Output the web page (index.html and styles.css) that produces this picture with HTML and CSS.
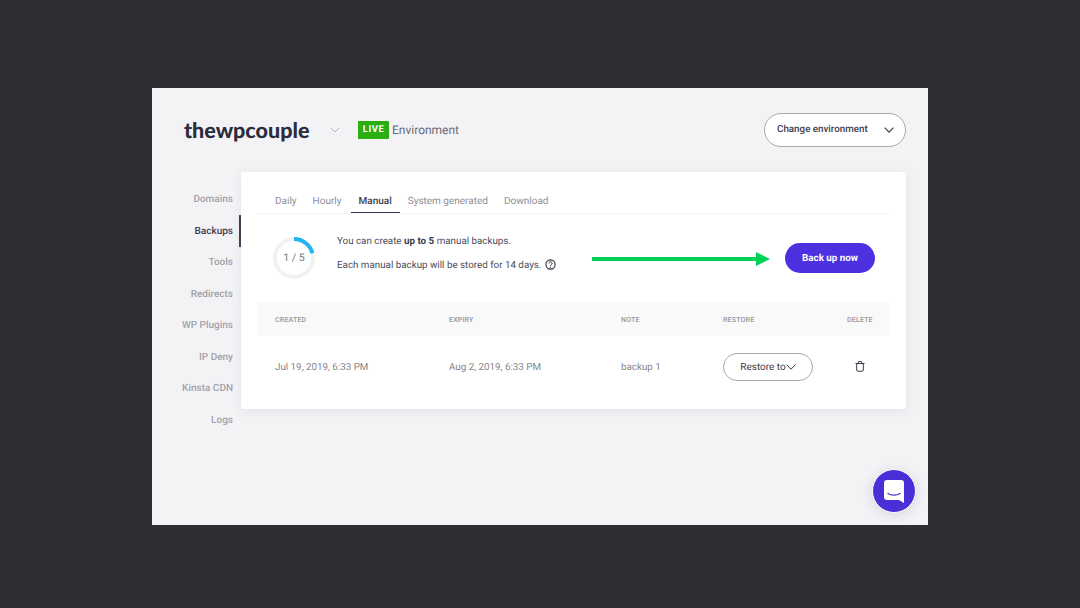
FILE: index.html
```html
<!DOCTYPE html>
<html lang="en">
<head>
<meta charset="utf-8">
<title>Backups</title>
<link rel="stylesheet" href="styles.css">
</head>
<body>
<div class="app">
  <header class="top">
    <div class="brand">thewpcouple</div>
    <svg class="brand-chev" width="10" height="6" viewBox="0 0 10 6"><path d="M1 1l4 4 4-4" fill="none" stroke="#b4b5bd" stroke-width="1"/></svg>
    <span class="live">LIVE</span>
    <span class="env">Environment</span>
    <button class="env-btn">Change environment
      <svg width="10" height="6" viewBox="0 0 10 6"><path d="M.6.6L5 5.2 9.4.6" fill="none" stroke="#3a3b4a" stroke-width="1.1"/></svg>
    </button>
  </header>
  <div class="main">
    <nav class="side">
      <a>Domains</a>
      <a class="on">Backups</a>
      <a>Tools</a>
      <a>Redirects</a>
      <a>WP Plugins</a>
      <a>IP Deny</a>
      <a>Kinsta CDN</a>
      <a>Logs</a>
    </nav>
    <section class="card">
      <div class="tabs">
        <a>Daily</a><a>Hourly</a><a class="sel">Manual</a><a>System generated</a><a class="last">Download</a>
      </div>
      <div class="info">
        <div class="ring">
          <svg width="42" height="42" viewBox="0 0 42 42">
            <circle cx="21" cy="21" r="19" fill="none" stroke="#f2f2f3" stroke-width="4"/>
            <path d="M21 2A19 19 0 0 1 39.400 16.200" fill="none" stroke="#22b4f2" stroke-width="4"/>
          </svg>
          <span>1 / 5</span>
        </div>
        <div class="copy">
          <p>You can create <b>up to 5</b> manual backups.</p>
          <p>Each manual backup will be stored for 14 days.
            <svg class="help" width="11" height="11" viewBox="0 0 11 11"><circle cx="5.5" cy="5.5" r="4.6" fill="none" stroke="#2b2c3a" stroke-width="1.1"/><path d="M3.9 4.4a1.6 1.6 0 1 1 2.4 1.4c-.5.3-.8.5-.8 1" fill="none" stroke="#2b2c3a" stroke-width="1"/><circle cx="5.5" cy="8.2" r=".6" fill="#2b2c3a"/></svg>
          </p>
        </div>
        <svg class="arrow" width="178" height="14" viewBox="0 0 178 14"><path d="M0 5h164V0l14 7-14 7V9H0z" fill="#00d258"/></svg>
        <button class="primary">Back up now</button>
      </div>
      <div class="table">
        <div class="row head">
          <span class="c1">CREATED</span><span class="c2">EXPIRY</span><span class="c3">NOTE</span><span class="c4">RESTORE</span><span class="c5">DELETE</span>
        </div>
        <div class="row body">
          <span class="c1">Jul 19, 2019, 6:33 PM</span><span class="c2">Aug 2, 2019, 6:33 PM</span><span class="c3">backup 1</span>
          <span class="c4"><button class="restore">Restore to<svg width="10" height="6" viewBox="0 0 10 6"><path d="M.5.6L5 5.200 9.500.6" fill="none" stroke="#3a3b4a" stroke-width="1"/></svg></button></span>
          <span class="c5"><svg width="10" height="11" viewBox="0 0 10 11"><path d="M1.700 2.500h6.600v6.700a1 1 0 0 1-1 1H2.700a1 1 0 0 1-1-1zM.5 2.500h9M3.300 2.300V1a.5.5 0 0 1 .5-.5h2.400a.5.5 0 0 1 .5.5v1.300" fill="none" stroke="#3a3b48" stroke-width="1"/></svg></span>
        </div>
      </div>
    </section>
  </div>
  <button class="chat" aria-label="Chat">
    <svg width="20" height="23" viewBox="0 0 20 23"><path d="M3 0h14a3 3 0 0 1 3 3v20l-5-3H3a3 3 0 0 1-3-3V3a3 3 0 0 1 3-3z" fill="#fff"/><path d="M4 13.500c3 2.200 9 2.200 12 0" fill="none" stroke="#4a2fd6" stroke-width="1.300" stroke-linecap="round"/></svg>
  </button>
</div>
</body>
</html>
```
FILE: styles.css
```css
* { box-sizing: border-box; }
html, body { margin: 0; height: 100%; }
body {
  background: #2e2f33;
  display: flex;
  align-items: center;
  justify-content: center;
  height: 608px;
  overflow: hidden;
  font-family: Roboto, "Liberation Sans", sans-serif;
  font-size: 10px;
  color: #4b4c5a;
  text-rendering: geometricPrecision;
}
.app {
  position: relative;
  width: 776px;
  height: 437px;
  margin-top: 5px;
  background: #f3f3f6;
  padding: 25px 22px 0 0;
}
.top { display: flex; align-items: center; height: 33px; padding-left: 32px; }
.brand { font-family: Lato, sans-serif; font-weight: 900; font-size: 21.500px; color: #2b2c3c; width: 146px; }
.brand-chev { margin-right: 18px; }
.live { background: #2aae12; color: #fff; font-weight: 700; font-size: 9.500px; letter-spacing: .5px; width: 31px; height: 18px; line-height: 18px; text-align: center; border-radius: 1px; }
.env { margin-left: 3px; font-size: 12px; color: #6a6b78; }
.env-btn {
  margin-left: auto; width: 142px; height: 34px; border: 1px solid #a9a9ae; border-radius: 17px;
  background: #fff; font: 500 9.800px Roboto, sans-serif; color: #3c3d4e; text-rendering: geometricPrecision;
  display: flex; align-items: center; justify-content: space-between; padding: 0 11px 0 12px;
}
.main { display: flex; margin-top: 26px; }
.side { width: 89px; padding-top: 11px; display: flex; flex-direction: column; }
.side a { height: 31.500px; line-height: 31.500px; padding-top: 1px; text-align: right; padding-right: 8px; font-weight: 500; color: #a1a2a8; position: relative; }
.side a.on { color: #3c3d4e; }
.side a.on::after { content: ""; position: absolute; right: 0; top: 0; width: 2px; height: 32px; background: #3f4050; }
.card { flex: 1; height: 237px; background: #fff; border-radius: 0 2px 2px 2px; box-shadow: 0 2px 10px rgba(60,60,90,.09); padding: 16px 17px 0; }
.tabs { display: flex; height: 26px; padding-left: 9px; border-bottom: 1px solid #f3f3f5; }
.tabs a { padding: 1px 8px 0; line-height: 25px; font-weight: 400; color: #8d8e96; height: 25px; }
.tabs a.sel { color: #3c3d4e; font-weight: 500; border-bottom: 1.500px solid #3c3d4e; height: 25px; margin-left: 1px; }
.tabs a.last { margin-left: 0; }
.info { display: flex; align-items: center; height: 88px; padding: 0 14px 0 15px; }
.ring { position: relative; width: 42px; height: 42px; }
.ring svg { display: block; }
.ring span { position: absolute; inset: 0; text-align: center; line-height: 42px; font-size: 10.500px; color: #77787f; }
.copy { margin-left: 22px; width: 255px; margin-bottom: 8px; font-size: 9.800px; }
.copy p { margin: 0; line-height: 14px; color: #4b4c5a; }
.copy p + p { margin-top: 10px; }
.copy b { font-weight: 700; color: #3c3d4e; }
.help { vertical-align: -2px; margin-left: 1px; }
.arrow { display: block; margin-top: 1px; }
.primary {
  margin-left: auto; width: 90px; height: 30px; border: 0; border-radius: 15px; background: #4d31e0;
  color: #fff; font: 700 9.800px Roboto, sans-serif; text-rendering: geometricPrecision;
}
.row { display: flex; align-items: center; }
.row.head { height: 34px; padding-top: 1px; background: #f9f9f9; font-size: 7px; font-weight: 500; color: #96979d; letter-spacing: .2px; }
.row.body { height: 61px; color: #85868d; font-size: 9.800px; }
.row.body .c1, .row.body .c2, .row.body .c3 { padding-top: 2px; }
.c1 { width: 174px; margin-left: 17px; }
.c2 { width: 172px; }
.c3 { width: 102px; }
.c4 { width: 124px; }
.c5 { width: 42px; }
.body .c5 { padding-left: 8px; display: flex; }
.restore {
  width: 90px; height: 28px; border: 1px solid #a9a9ae; border-radius: 14px; background: #fff;
  font: 400 10px Roboto, sans-serif; color: #3c3d4e; text-rendering: geometricPrecision; display: flex; align-items: center; justify-content: center; padding: 1px 0 0;
}
.chat { position: absolute; left: 720px; top: 381px; width: 44px; height: 44px; border-radius: 50%; border: 1px solid #fff; background: #4a2fd6; padding: 0; display: flex; align-items: center; justify-content: center; box-shadow: 0 2px 12px rgba(40,40,80,.15); }
```
